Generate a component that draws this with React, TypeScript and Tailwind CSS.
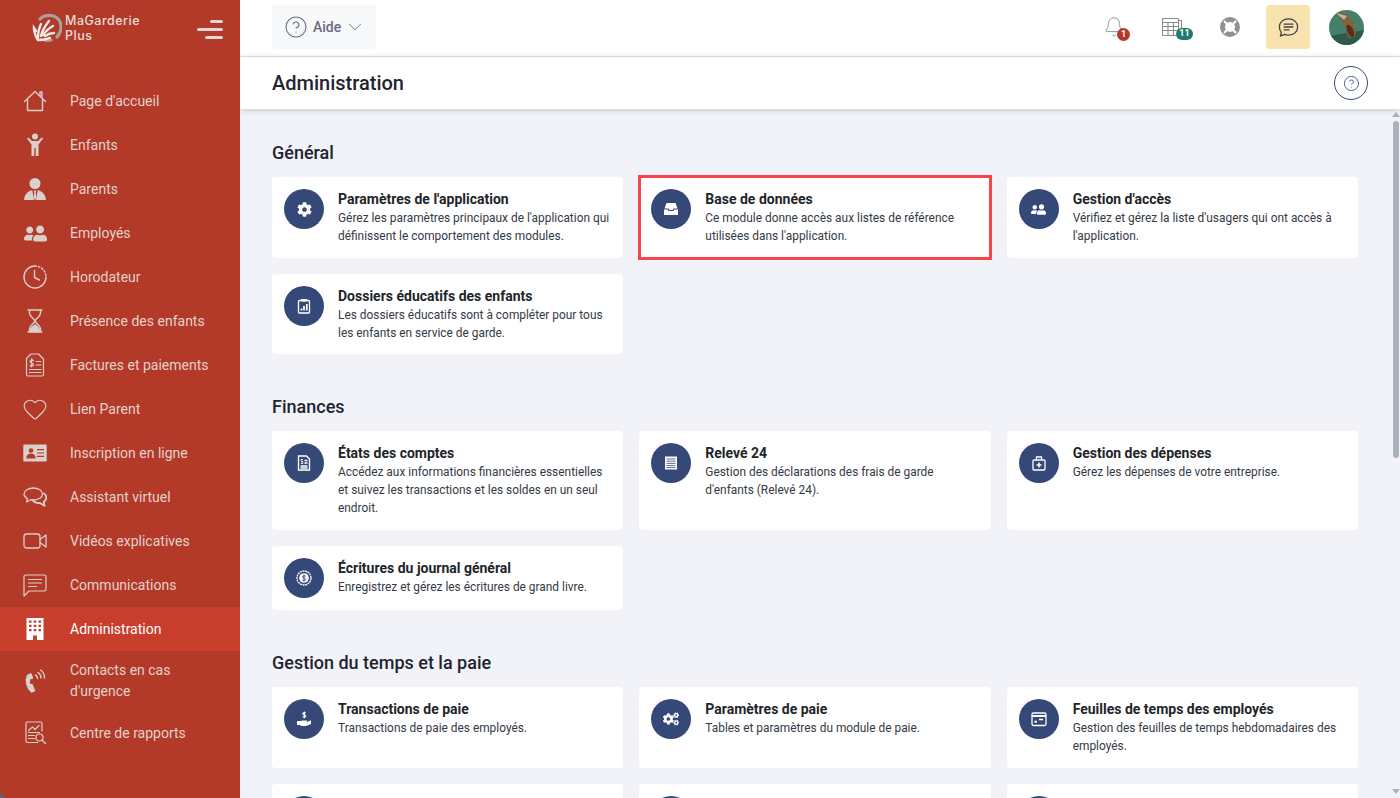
import type { ReactNode } from 'react';
import { Bell, ChevronDown, CircleHelp, Heart } from 'lucide-react';
import { FaCog, FaCogs, FaUserFriends } from 'react-icons/fa';

function Ico({ children, fill = 'none', sw = 1.4 }: { children: ReactNode; fill?: string; sw?: number }) {
  return (
    <svg viewBox="0 0 24 24" width="24" height="24" fill={fill} stroke={fill === 'none' ? 'currentColor' : 'none'} strokeWidth={sw} strokeLinecap="round" strokeLinejoin="round">
      {children}
    </svg>
  );
}

const navItems: { label: string; icon: ReactNode; active?: boolean; tall?: boolean }[] = [
  {
    label: "Page d'accueil",
    icon: <Ico><path d="M1.500 12.500 12 2.500l10.500 10" /><path d="M4.500 10v11.500h15V10" /><path d="M17 6.500V3h2v5" /></Ico>,
  },
  {
    label: 'Enfants',
    icon: <Ico fill="currentColor"><circle cx="12" cy="3.500" r="3" /><path d="M4 5.500 5.200 4.500 9 8h6l3.800-3.500L20 5.500 15.500 11.500V23h-2.800v-8h-1.400v8H8.500V11.500z" /></Ico>,
  },
  {
    label: 'Parents',
    icon: <Ico fill="currentColor"><circle cx="12" cy="6.500" r="5.500" /><path d="M1 23C1.500 18 4 14.500 9.300 13L11 23zM23 23c-.5-5-3-8.500-8.300-10L13 23z" /><path d="M10.800 13.500h2.400l-.5 2 .8 5L12 23l-1.500-2.500.8-5z" /></Ico>,
  },
  {
    label: 'Employés',
    icon: <span className="text-[23px]"><FaUserFriends className="-scale-x-100" /></span>,
  },
  {
    label: 'Horodateur',
    icon: <Ico><path d="M12 1a11 11 0 1 0 11 11" /><path d="M12 1a11 11 0 0 1 11 11" strokeDasharray="1.500 2" /><path d="M11.500 5.500v7l5 2.500" /></Ico>,
  },
  {
    label: 'Présence des enfants',
    icon: <Ico><path d="M5 1h14M5 23h14M6.500 1v3c0 3.500 5 6 5.500 8 .5-2 5.500-4.500 5.500-8V1M6.500 23v-3c0-3.500 5-6 5.500-8 .5 2 5.500 4.500 5.500 8v3" /><path d="M7 22.500c0-3 3-5 5-6.500 2 1.500 5 3.500 5 6.500z" fill="currentColor" /></Ico>,
  },
  {
    label: 'Factures et paiements',
    icon: <Ico sw={1.200}><path d="M8 1h7.500L20.500 6v15.500a1.500 1.500 0 0 1-1.500 1.500H5a1.500 1.500 0 0 1-1.500-1.500V5.500z" /><path d="M13 8.500h5M13 12h5M6.500 16.500h11.500M6.500 19.500h11.500" /><path d="M10.500 7.500C9.500 6.500 7 6.800 7 8.500s3.500 1.300 3.500 3-2.500 2-3.500 1M8.700 5.500v8.500" /></Ico>,
  },
  {
    label: 'Lien Parent',
    icon: <span className="block -my-0.5"><Heart size={26} strokeWidth={1.100} /></span>,
  },
  {
    label: 'Inscription en ligne',
    icon: <Ico fill="currentColor"><path fillRule="evenodd" d="M1 3.500h22a.7.700 0 0 1 .7.700v15.600a.7.700 0 0 1-.7.700H1a.7.700 0 0 1-.7-.7V4.200a.7.700 0 0 1 .7-.7zM8 7.200a2.300 2.300 0 1 0 0 4.600 2.300 2.300 0 0 0 0-4.600zM3.200 17.500h9.500c0-3-1.700-5-4.700-5s-4.800 2-4.800 5zM14 8v1.200h7V8zM14 11.400v1.200h7v-1.200zM14 14.800V16h7v-1.200z" /></Ico>,
  },
  {
    label: 'Assistant virtuel',
    icon: <Ico sw={1.300}><path d="M10.500 3C5.500 3 1 5.500 1 9c0 2 1.500 3.700 3.500 4.700L3.500 17l4.500-2.300c1 .2 1.700.3 2.500.3 5 0 9-2.500 9-6s-4-6-9-6z" /><path d="M21 8.500c1.500 1 2.300 2.500 2.300 4 0 1.800-1 3.300-2.500 4.300l.7 4-4.500-2.800c-3 .2-6-.8-7.500-3" strokeWidth="1.800" /></Ico>,
  },
  {
    label: 'Vidéos explicatives',
    icon: <Ico sw={1.300}><rect x="1" y="5" width="16" height="14" rx="2.500" /><path d="m17 10.500 6-4.500v12l-6-4.500" /></Ico>,
  },
  {
    label: 'Communications',
    icon: <Ico sw={1.200}><path d="M2.500 2h19A1.500 1.500 0 0 1 23 3.500v13a1.500 1.500 0 0 1-1.500 1.500H6l-5 5V3.500A1.500 1.500 0 0 1 2.500 2z" /><path d="M5.500 6.500h13M5.500 10h13M5.500 13.500h8" /></Ico>,
  },
  {
    label: 'Administration',
    active: true,
    icon: <Ico fill="currentColor"><path fillRule="evenodd" d="M3.500 1h17v22h-6.500v-4.500h-4V23H3.500zM6 3.500v2.300h2.500V3.500zM10.700 3.500v2.300h2.600V3.500zM15.500 3.500v2.300H18V3.500zM6 7.700V10h2.500V7.700zM10.700 7.700V10h2.600V7.700zM15.500 7.700V10H18V7.700zM6 12v2.300h2.500V12zM10.700 12v2.300h2.600V12zM15.500 12v2.300H18V12z" /></Ico>,
  },
  {
    label: "Contacts en cas d'urgence",
    tall: true,
    icon: <Ico sw={1.400}><path d="M8 5 4.500 6.500C2 12 4 19 8.500 23l3-1.500-2.500-6-2 .5c-1-2-1-4.500 0-6.500l2.500-.5z" fill="currentColor" /><path d="M12.500 6c1.500.7 2 2 2 3.500M15 3.500c2.300 1.200 3 3.300 3 5.500M17.500 1c3 1.700 4 4.500 4 8" /></Ico>,
  },
  {
    label: 'Centre de rapports',
    icon: <Ico sw={1.200}><path d="M15 21.500H4.500A1.500 1.500 0 0 1 3 20V2.500A1.500 1.500 0 0 1 4.500 1h13A1.500 1.500 0 0 1 19 2.500V10" /><path d="M5.500 9.500 9.500 6l2.500 2.500 4-4M5.500 11.500h11M5.500 14.500h6M5.500 17.500h6" /><circle cx="16.500" cy="16.500" r="3.500" /><path d="m19 19 3.500 3.500" /></Ico>,
  },
];

const white = (p: ReactNode) => (
  <svg viewBox="0 0 16 16" width="16" height="16" fill="none" stroke="white" strokeWidth="1.300">{p}</svg>
);

const icons = {
  gear: <FaCog size={15} color="white" />,
  box: white(<><path d="M3.500 2h9l2 5.500H10.500L9.800 9H6.200l-.7-1.500H1.500z" fill="white" stroke="none" /><path d="M1 8.500h3.800l.7 1.500h5l.7-1.500H15V14H1z" fill="white" stroke="none" /></>),
  users: <FaUserFriends size={15} color="white" className="-scale-x-100" />,
  clip: white(<><rect x="2.500" y="2.500" width="11" height="12.500" rx="1" /><rect x="5" y="1" width="6" height="2.500" fill="white" stroke="none" /><path d="M5.500 12.500v-2M8 12.500V8M10.800 12.500V6" strokeWidth="1.700" /></>),
  account: white(<><path d="M2.500 1h8l3 3v11h-11z" /><path d="M8.500 5.500h3M8.500 8h3M4.500 11h7M4.500 13h7" /><path d="M7 4.500H5.200v2h1.600v2H4.800" strokeWidth=".9" /></>),
  sheet: white(<><rect x="2" y="1.500" width="12" height="13" fill="white" stroke="none" /><path d="M3.500 4h9M3.500 6.200h9M3.500 8.400h9M3.500 10.600h9M3.500 12.600h9" stroke="#364878" strokeWidth=".8" /></>),
  bag: white(<><rect x="2" y="5" width="12" height="10" rx="1" /><path d="M5.500 5V2h5v3" /><path d="M8 7.500v5M5.500 10h5" strokeWidth="1.500" /></>),
  coin: white(<><circle cx="8" cy="8" r="7" strokeDasharray="2 .6" /><circle cx="8" cy="8" r="4.800" fill="white" stroke="none" /><path d="M9.800 6.300C9 5.500 6.500 5.500 6.500 7c0 1.500 3.200 1 3.200 2.500 0 1.300-2.500 1.400-3.400.5M8 4.500v7" stroke="#364878" strokeWidth=".9" /></>),
  pay: white(<><path d="M1 10h3.500l2.500-.5h3.500c1 0 1 1.500 0 1.500H8l3 0 4-1.700V13l-5 2H5l-1-1H1z" fill="white" stroke="none" /><path d="M9.700 2.200C9 1.300 6.800 1.300 6.800 2.700c0 1.400 3 1 3 2.400 0 1.400-2.300 1.400-3.100.6M8.300 .5v6.800" strokeWidth="1.100" /></>),
  gears: <FaCogs size={16} color="white" />,
  cal: white(<><rect x="1" y="2" width="14" height="12.500" rx="1.500" /><path d="M1 5h14" strokeWidth="2" /><path d="M3.500 10.500h2.500M8 8.500h4M3.500 11h2" strokeWidth="1.500" /></>),
};

type CardData = { title?: string; desc?: string; icon?: ReactNode; selected?: boolean };

const sections: { title: string; cards: CardData[] }[] = [
  {
    title: 'Général',
    cards: [
      { title: "Paramètres de l'application", desc: "Gérez les paramètres principaux de l'application qui définissent le comportement des modules.", icon: icons.gear },
      { title: 'Base de données', desc: "Ce module donne accès aux listes de référence utilisées dans l'application.", icon: icons.box, selected: true },
      { title: "Gestion d'accès", desc: "Vérifiez et gérez la liste d'usagers qui ont accès à l'application.", icon: icons.users },
      { title: 'Dossiers éducatifs des enfants', desc: 'Les dossiers éducatifs sont à compléter pour tous les enfants en service de garde.', icon: icons.clip },
    ],
  },
  {
    title: 'Finances',
    cards: [
      { title: 'États des comptes', desc: 'Accédez aux informations financières essentielles et suivez les transactions et les soldes en un seul endroit.', icon: icons.account },
      { title: 'Relevé 24', desc: "Gestion des déclarations des frais de garde d'enfants (Relevé 24).", icon: icons.sheet },
      { title: 'Gestion des dépenses', desc: 'Gérez les dépenses de votre entreprise.', icon: icons.bag },
      { title: 'Écritures du journal général', desc: 'Enregistrez et gérez les écritures de grand livre.', icon: icons.coin },
    ],
  },
  {
    title: 'Gestion du temps et la paie',
    cards: [
      { title: 'Transactions de paie', desc: 'Transactions de paie des employés.', icon: icons.pay },
      { title: 'Paramètres de paie', desc: 'Tables et paramètres du module de paie.', icon: icons.gears },
      { title: 'Feuilles de temps des employés', desc: 'Gestion des feuilles de temps hebdomadaires des employés.', icon: icons.cal },
      {},
      {},
      {},
    ],
  },
];

function Card({ title, desc, icon, selected }: CardData) {
  return (
    <div className="relative flex gap-3.5 rounded bg-white px-3 pb-[12.5px] pt-3">
      <div className="flex h-10 w-10 shrink-0 items-center justify-center rounded-full bg-[#364878]">{icon}</div>
      <div>
        <div className="text-[14px] font-bold leading-5 text-[#212529]">{title}</div>
        <div className="text-[11.9px] leading-[18px] text-[#343a46]">{desc}</div>
      </div>
      {selected && <div className="absolute -inset-x-px -inset-y-0.5 border-[3px] border-[#f5444a]" />}
    </div>
  );
}

function Sidebar() {
  return (
    <aside className="flex w-60 shrink-0 flex-col rounded-bl-lg bg-[#b33a28]">
      <div className="flex h-[79px] shrink-0 items-start justify-between pl-8 pr-[17px] pt-[13px]">
        <div className="flex items-center gap-[3px]">
          <svg viewBox="0 0 30 28" width="30" height="28" fill="none" strokeLinecap="round">
            <path d="M8 5C12 .5 22-.5 27 6c3 5 3 12-2 17" stroke="#a9a09d" strokeWidth="3.200" />
            <path d="M20 26c-4 1.500-8 1-11-1" stroke="#a9a09d" strokeWidth="2" />
            <path d="M6 26c-2-3-4-8-4-12l2 3M6 24c0-4 0-8 3-14M9 22c1-5 4-10 8-15M11 21c3-4 6-7 10-9M13 22c3-2 6-3 9-3M8 26c4 0 7-1 10-2" stroke="#f2e9e6" strokeWidth="2.400" />
          </svg>
          <div className="font-['Inter',sans-serif] text-[12.5px] font-medium leading-[15px] tracking-[0.5px] text-[#e8dcd9]">
            <div>MaGarderie</div>
            <div>Plus</div>
          </div>
        </div>
        <div className="flex w-[26px] flex-col items-end gap-[5px] pt-[7px]">
          <div className="h-[3px] w-[13px] rounded-full bg-[#e0d6d3]" />
          <div className="h-[3px] w-[26px] rounded-full bg-[#e0d6d3]" />
          <div className="h-[3px] w-[18px] rounded-full bg-[#e0d6d3]" />
        </div>
      </div>
      <nav className="flex flex-col">
        {navItems.map((item) => (
          <div
            key={item.label}
            className={`flex items-center gap-[23px] pl-[23px] pr-5 text-[14px] leading-[21px] ${item.tall ? 'h-[60px]' : 'h-11'} ${item.active ? 'bg-[#c73e2c] text-white' : 'text-[#e4d1cc]'}`}
          >
            <span className={`flex w-6 shrink-0 justify-center ${item.active ? 'text-white' : 'text-[#d9cfcc]'}`}>{item.icon}</span>
            <span>{item.label}</span>
          </div>
        ))}
      </nav>
    </aside>
  );
}

function TopBar() {
  return (
    <header className="flex h-[57px] shrink-0 items-center justify-between border-b border-[#e6e6ea] bg-white pb-[2px] pl-8 pr-[36px]">
      <div className="flex h-11 w-[104px] items-center rounded bg-[#f7f8fa] pl-3 text-[#6a6a80]">
        <CircleHelp size={24} strokeWidth={1.100} />
        <span className="ml-[5px] text-[14px] font-medium">Aide</span>
        <ChevronDown size={22} strokeWidth={1} className="ml-[3px]" />
      </div>
      <div className="flex items-center">
        <div className="relative text-[#8c8c8c]">
          <Bell size={22} strokeWidth={1} />
          <span className="absolute left-[14px] top-[12px] flex h-[13px] w-[13px] items-center justify-center rounded-full bg-[#b33a28] text-[9px] font-bold text-white">1</span>
        </div>
        <div className="relative ml-[37px] w-[31px]">
          <svg viewBox="0 0 20 18" width="20" height="18" fill="none" stroke="#8c8c8c" strokeWidth="1.100">
            <rect x=".5" y=".5" width="16" height="17" rx="1" fill="white" />
            <path d="M.5 4.500h16M.5 8.500h16M.5 12.500h16M6 4.500v13M11.500 4.500v13" />
            <path d="M16.500 2.500h3v15h-3" />
          </svg>
          <span className="absolute left-[14px] top-[10px] flex h-[12px] w-[17px] items-center justify-center rounded-full bg-[#1f7a6d] text-[9px] font-bold text-white">11</span>
        </div>
        <svg viewBox="0 0 20 20" width="20" height="20" fill="none" className="ml-[27px]">
          <circle cx="10" cy="10" r="7.500" stroke="#919191" strokeWidth="5" />
          <path d="M4 4l3.200 3.200M16 4l-3.200 3.200M4 16l3.200-3.200M16 16l-3.200-3.200" stroke="white" strokeWidth="2.200" />
        </svg>
        <div className="ml-[26px] flex h-11 w-11 items-center justify-center rounded bg-[#f8e2ad]">
          <svg viewBox="0 0 24 24" width="23" height="23" fill="none" stroke="#3f3f46" strokeWidth="1.300" strokeLinecap="round" strokeLinejoin="round">
            <path d="M12 3c5.500 0 9.500 3.500 9.500 8.500S17.500 20 12 20c-1.500 0-3-.3-4.200-.8L3.500 21l1-3.800C3.300 15.700 2.500 13.700 2.500 11.500 2.500 6.500 6.500 3 12 3z" />
            <path d="M7.500 8.500h9M7.500 11.500h9M7.500 14.500h5" strokeWidth="1.500" />
          </svg>
        </div>
        <svg viewBox="0 0 35 35" width="35" height="35" className="ml-[19px] rounded-full">
          <rect width="35" height="35" fill="#46806a" />
          <path d="M0 26 35 20v15H0z" fill="#2f5a49" />
          <path d="M9 5c4-3 9-2 11 2l4 5 3 12c-1 4-5 5-8 3l-3-11-4-6z" fill="#85603f" />
          <path d="M7 3 18 6l-3 4z" fill="#c2b3a4" />
          <path d="M18 15c3-1 6 3 7 8s-2 5-4 3-5-9-3-11z" fill="#54301a" />
        </svg>
      </div>
    </header>
  );
}

function Scrollbar() {
  return (
    <div className="flex w-2 shrink-0 flex-col items-center pb-1 pr-px pt-[3px]">
      <div className="h-0 w-0 border-x-[4px] border-b-[5px] border-x-transparent border-b-[#a9b1bb]" />
      <div className="mt-[4px] h-[337px] w-[6px] rounded-full bg-[#a9b1bb]" />
      <div className="mt-auto h-0 w-0 border-x-[4px] border-t-[5px] border-x-transparent border-t-[#a9b1bb]" />
    </div>
  );
}

export default function App() {
  return (
    <div className="flex h-screen w-full overflow-hidden bg-[#5d6373] font-['Roboto',sans-serif]">
      <Sidebar />
      <main className="flex min-w-0 flex-1 flex-col overflow-hidden bg-[#f1f3f8]">
        <TopBar />
        <div className="relative z-10 flex h-[52px] shrink-0 items-center justify-between bg-white pl-8 pr-8 shadow-[0_1px_6px_rgba(0,0,0,0.2)]">
          <h1 className="text-[20px] font-medium text-[#1f2430]">Administration</h1>
          <div className="flex h-[34px] w-[34px] items-center justify-center rounded-full border border-[#34497a] text-[#34497a]">
            <CircleHelp size={17} strokeWidth={1.200} />
          </div>
        </div>
        <div className="flex min-h-0 flex-1">
          <div className="min-w-0 flex-1 overflow-hidden pl-8 pr-[34px] pt-8">
            {sections.map((s) => (
              <section key={s.title} className="mb-[41px]">
                <h2 className="mb-3 text-[18px] font-medium leading-6 text-[#1f2430]">{s.title}</h2>
                <div className="grid grid-cols-3 gap-4">
                  {s.cards.map((c, i) => (
                    <Card key={i} {...c} />
                  ))}
                </div>
              </section>
            ))}
          </div>
          <Scrollbar />
        </div>
      </main>
    </div>
  );
}
